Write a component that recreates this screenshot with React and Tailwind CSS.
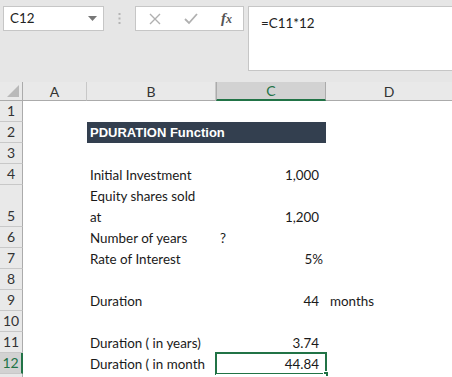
import React from 'react';

const ROWS = [
  { n: 1, h: 'h-[21px]' },
  { n: 2, h: 'h-[21px]' },
  { n: 3, h: 'h-[21px]' },
  { n: 4, h: 'h-[21px]' },
  { n: 5, h: 'h-[42px]' },
  { n: 6, h: 'h-[21px]' },
  { n: 7, h: 'h-[21px]' },
  { n: 8, h: 'h-[21px]' },
  { n: 9, h: 'h-[21px]' },
  { n: 10, h: 'h-[21px]' },
  { n: 11, h: 'h-[21px]' },
  { n: 12, h: 'h-[21px]' },
  { n: 13, h: 'h-[21px]' },
];

// cell contents per row
const DATA = {
  4: { b: 'Initial Investment', c: '1,000' },
  5: { b: 'Equity shares sold at', c: '1,200', wrap: true },
  6: { b: 'Number of years', cLeft: '?' },
  7: { b: 'Rate of Interest', c: '5%', pct: true },
  9: { b: 'Duration', c: '44', d: 'months' },
  11: { b: 'Duration ( in years)', c: '3.74' },
  12: { b: 'Duration ( in month', c: '44.84', sel: true },
};

const cellFont = "font-['Lato','Liberation_Sans',sans-serif] text-[13.4px] text-[#1a1a1a] leading-[18px]";

function Row({ n, h }) {
  const d = DATA[n] || {};
  const active = n === 12;
  return (
    <>
      <div
        className={`${h} flex items-end justify-center pb-[1px] border-b border-[#c8c8c8] font-['Lato',sans-serif] text-[14px] leading-[18px] ${
          active ? 'bg-[#d2d2d2] text-[#217346] border-r-2 border-r-[#217346]' : 'bg-[#e9e9e9] text-[#333] border-r border-r-[#ababab]'
        }`}
      >
        {n < 13 ? n : ''}
      </div>
      <div className={`${h} bg-white`} />
      {n === 2 ? (
        <div className={`${h} col-span-2 bg-[#333f4f] flex items-center px-[3px] font-['Liberation_Sans',Arial,sans-serif] font-bold text-[13px] text-white`}>
          PDURATION Function
        </div>
      ) : (
        <>
          <div className={`${h} bg-white flex items-end pb-[1px] pl-[3px] ${cellFont}`}>
            {d.wrap ? (
              <div className="flex flex-col">
                <span className="mb-[3px]">Equity shares sold</span>
                <span>at</span>
              </div>
            ) : (
              <span className="whitespace-nowrap">{d.b}</span>
            )}
          </div>
          <div className={`${h} bg-white relative flex items-end pb-[1px] ${cellFont} ${d.cLeft ? 'justify-start pl-[4px]' : 'justify-end'} ${d.pct ? 'pr-[3px]' : 'pr-[7px]'}`}>
            {d.c || d.cLeft}
            {d.sel && (
              <div className="absolute inset-[-1px] border-2 border-[#217346] pointer-events-none">
                <div className="absolute right-[-4px] bottom-[-4px] w-[6px] h-[6px] bg-[#217346] border border-white" />
              </div>
            )}
          </div>
        </>
      )}
      <div className={`${h} bg-white flex items-end pb-[1px] pl-[4px] ${cellFont}`}>{d.d}</div>
    </>
  );
}

export default function App() {
  return (
    <div className="w-[452px] h-[377px] overflow-hidden bg-[#e6e6e6] font-['Lato',sans-serif]">
      {/* formula bar */}
      <div className="h-[82px] flex items-start pt-[6px] pl-[3px]">
        <div className="w-[101px] h-[25px] bg-white border border-[#c6c6c6] flex items-center justify-between pl-[6px] pr-[6px]">
          <span className="text-[13.4px] text-[#222]">C12</span>
          <svg width="9" height="5" viewBox="0 0 9 5"><path d="M0 0h9L4.5 5z" fill="#777" /></svg>
        </div>
        <div className="w-[31px] h-[25px] flex items-center justify-center">
          <svg width="3" height="11" viewBox="0 0 3 11">
            <rect x="0.5" y="0" width="2" height="2" fill="#b4b4b4" />
            <rect x="0.5" y="4.5" width="2" height="2" fill="#b4b4b4" />
            <rect x="0.5" y="9" width="2" height="2" fill="#b4b4b4" />
          </svg>
        </div>
        <div className="w-[109px] h-[25px] bg-white border border-[#c6c6c6] flex items-center">
          <div className="w-[38px] flex justify-center">
            <svg width="12" height="12" viewBox="0 0 12 12"><path d="M1 1l10 10M11 1L1 11" stroke="#b0b0b0" strokeWidth="1.4" /></svg>
          </div>
          <div className="w-[34px] flex justify-center">
            <svg width="14" height="12" viewBox="0 0 14 12"><path d="M1 6l4 4 8-9" stroke="#b0b0b0" strokeWidth="1.8" fill="none" /></svg>
          </div>
          <div className="flex-1 flex justify-center pl-[2px]">
            <span className="font-['Liberation_Serif',serif] italic font-bold text-[15px] text-[#555] leading-none">
              f<span className="text-[12px]">x</span>
            </span>
          </div>
        </div>
        <div className="ml-[4px] flex-1 h-[65px] bg-white border border-[#c6c6c6] border-r-0 pl-[12px] pt-[3px]">
          <span className="text-[13.4px] text-[#222]">=C11*12</span>
        </div>
      </div>

      {/* sheet */}
      <div className="grid grid-cols-[23px_64px_129px_110px_1fr]">
        {/* column headers */}
        <div className="h-[19px] bg-[#e9e9e9] border-b border-r border-[#ababab] relative">
          <svg className="absolute right-[3px] bottom-[3px]" width="12" height="12" viewBox="0 0 12 12"><path d="M12 0v12H0z" fill="#b9b9b9" /></svg>
        </div>
        <div className="h-[19px] bg-[#e9e9e9] border-b border-r border-[#ababab] border-r-[#c8c8c8] flex items-center justify-center text-[14px] text-[#333]">A</div>
        <div className="h-[19px] bg-[#e9e9e9] border-b border-r border-[#ababab] border-r-[#c8c8c8] flex items-center justify-center text-[14px] text-[#333]">B</div>
        <div className="h-[19px] bg-[#d2d2d2] border-b-2 border-b-[#217346] border-x border-x-[#ababab] flex items-center justify-center text-[14px] text-[#217346]">C</div>
        <div className="h-[19px] bg-[#e9e9e9] border-b border-[#ababab] flex items-center justify-center text-[14px] text-[#333]">D</div>
        {ROWS.map((r) => (
          <Row key={r.n} {...r} />
        ))}
      </div>
    </div>
  );
}
